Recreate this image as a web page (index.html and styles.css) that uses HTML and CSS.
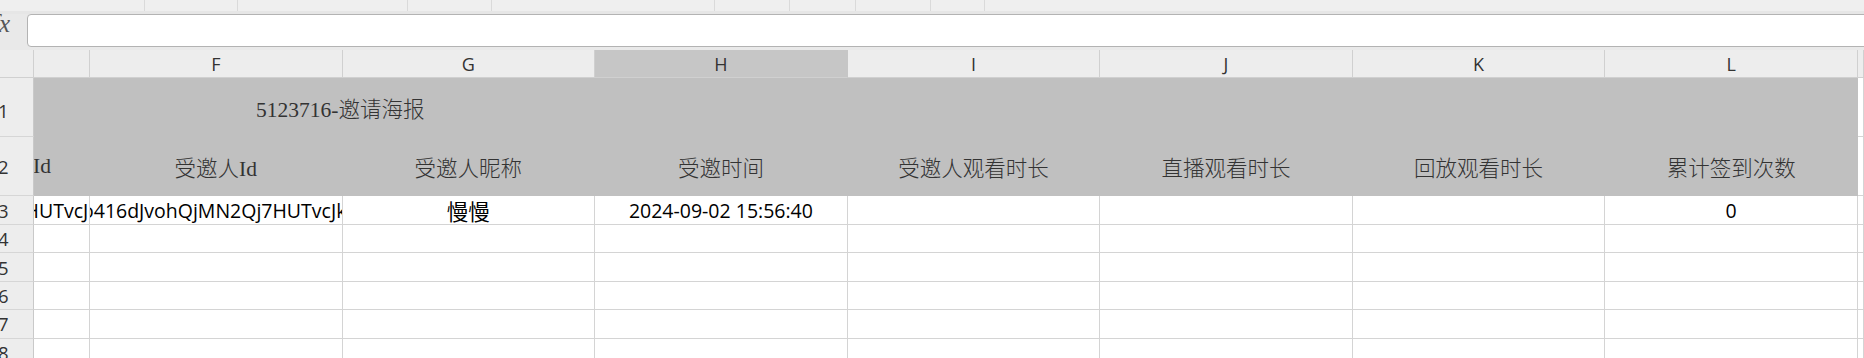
FILE: index.html
```html
<!DOCTYPE html>
<html lang="zh-CN">
<head>
  <meta charset="UTF-8" />
  <meta name="viewport" content="width=device-width, initial-scale=1.0" />
  <title>邀请海报</title>
  <link rel="stylesheet" href="styles.css">
</head>
<body>

  <!-- Ribbon bottom edge -->
  <div class="ribbon">
    <span style="width: 145px"></span>
    <span style="width: 93px"></span>
    <span style="width: 170px"></span>
    <span style="width: 84px"></span>
    <span style="width: 223px"></span>
    <span style="width: 75px"></span>
    <span style="width: 66px"></span>
    <span style="width: 75px"></span>
    <span style="width: 54px"></span>
  </div>

  <!-- Formula bar -->
  <div class="formula-bar">
    <span class="fx">fx</span>
    <div class="formula-input"></div>
  </div>

  <!-- Sheet -->
  <main class="sheet" id="sheet">
    <div class="cell corner"></div>
    <div class="cell col-head"></div>
    <div class="cell col-head">F</div>
    <div class="cell col-head">G</div>
    <div class="cell col-head selected">H</div>
    <div class="cell col-head">I</div>
    <div class="cell col-head">J</div>
    <div class="cell col-head">K</div>
    <div class="cell col-head">L</div>
    <div class="cell col-head"></div>

    <div class="cell row-head row-first"><span>1</span></div>
    <div class="cell fill title"><span>5123716-邀请海报</span></div>
    <div class="cell"></div>

    <div class="cell row-head"><span>2</span></div>
    <div class="cell fill label left"><span class="id-cut">Id</span></div>
    <div class="cell fill label">受邀人Id</div>
    <div class="cell fill label">受邀人昵称</div>
    <div class="cell fill label">受邀时间</div>
    <div class="cell fill label">受邀人观看时长</div>
    <div class="cell fill label">直播观看时长</div>
    <div class="cell fill label">回放观看时长</div>
    <div class="cell fill label">累计签到次数</div>
    <div class="cell"></div>

    <div class="cell row-head"><span>3</span></div>
    <div class="cell data right"><span class="cut-right">Qj7HUTvcJo</span></div>
    <div class="cell data left"><span class="cut-left">o416dJvohQjMN2Qj7HUTvcJk</span></div>
    <div class="cell data cjk">慢慢</div>
    <div class="cell data">2024-09-02 15:56:40</div>
    <div class="cell data"></div>
    <div class="cell data"></div>
    <div class="cell data"></div>
    <div class="cell data">0</div>
    <div class="cell"></div>
  </main>

  <script>
    // empty rows 4-8
    const sheet = document.getElementById("sheet");
    for (let r = 4; r <= 8; r++) {
      const head = document.createElement("div");
      head.className = "cell row-head";
      head.innerHTML = `<span>${r}</span>`;
      sheet.appendChild(head);
      for (let c = 0; c < 9; c++) {
        const cell = document.createElement("div");
        cell.className = "cell";
        sheet.appendChild(cell);
      }
    }
  </script>

</body>
</html>
```

FILE: styles.css
```css
body {
  margin: 0;
  background-color: #ffffff;
  overflow: hidden;
  font-family: 'Open Sans', 'Noto Sans CJK SC', sans-serif;
  color: #000;
}

.ribbon {
  display: flex;
  height: 11px;
  background-color: #efefef;
}

.ribbon span {
  box-sizing: border-box;
  border-right: 1px solid #dadada;
}

.formula-bar {
  display: flex;
  align-items: flex-start;
  height: 39px;
  background-color: #e9e9e9;
  border-top: 3px solid #e6e6e6;
  box-sizing: border-box;
}

.fx {
  width: 35px;
  margin-left: -8px;
  padding-top: 4px;
  font-family: 'Liberation Serif', serif;
  font-style: italic;
  font-size: 25px;
  line-height: 11px;
  color: #555;
}

.formula-input {
  flex: 1;
  height: 33px;
  margin-right: -10px;
  box-sizing: border-box;
  background-color: #fff;
  border: 1px solid #b3b3b3;
  border-radius: 4px;
}

.sheet {
  display: grid;
  grid-template-columns: 34px 56px repeat(7, 252.57px) 1fr;
  grid-template-rows: 28px 59px 59px 29px repeat(5, 28.4px);
}

.cell {
  box-sizing: border-box;
  display: flex;
  align-items: center;
  justify-content: center;
  overflow: hidden;
  white-space: nowrap;
  border-right: 1px solid #d4d4d4;
  border-bottom: 1px solid #d4d4d4;
}

.corner,
.col-head {
  background-color: #ededed;
  border-color: #d0d0d0;
  font-size: 18px;
  color: #333;
}

.col-head.selected {
  background-color: #c6c6c6;
  border-right-color: #c6c6c6;
}

.row-head {
  justify-content: flex-start;
  background-color: #ededed;
  border-right-color: #c9c9c9;
  border-bottom-color: #d6d6d6;
  font-size: 18.5px;
  color: #333;
}

.row-head span {
  margin-left: -2px;
}

.row-first span {
  margin-top: 6px;
}

.fill {
  background-color: #c0c0c0;
  border-color: #c0c0c0;
}

.title,
.label {
  font-family: 'Liberation Serif', 'Noto Sans CJK SC', serif;
  font-size: 21.5px;
  font-weight: 300;
  color: #333;
}

.title {
  grid-column: 2 / 10;
  justify-content: flex-start;
  padding-left: 222px;
}

.left {
  justify-content: flex-start;
}

.right {
  justify-content: flex-end;
}

.id-cut {
  margin-left: -1px;
}

.data {
  font-size: 19.5px;
}

.cjk {
  font-size: 21.5px;
}

.cut-left {
  margin-left: -8px;
}

.cut-right {
  margin-right: -11px;
}
```
